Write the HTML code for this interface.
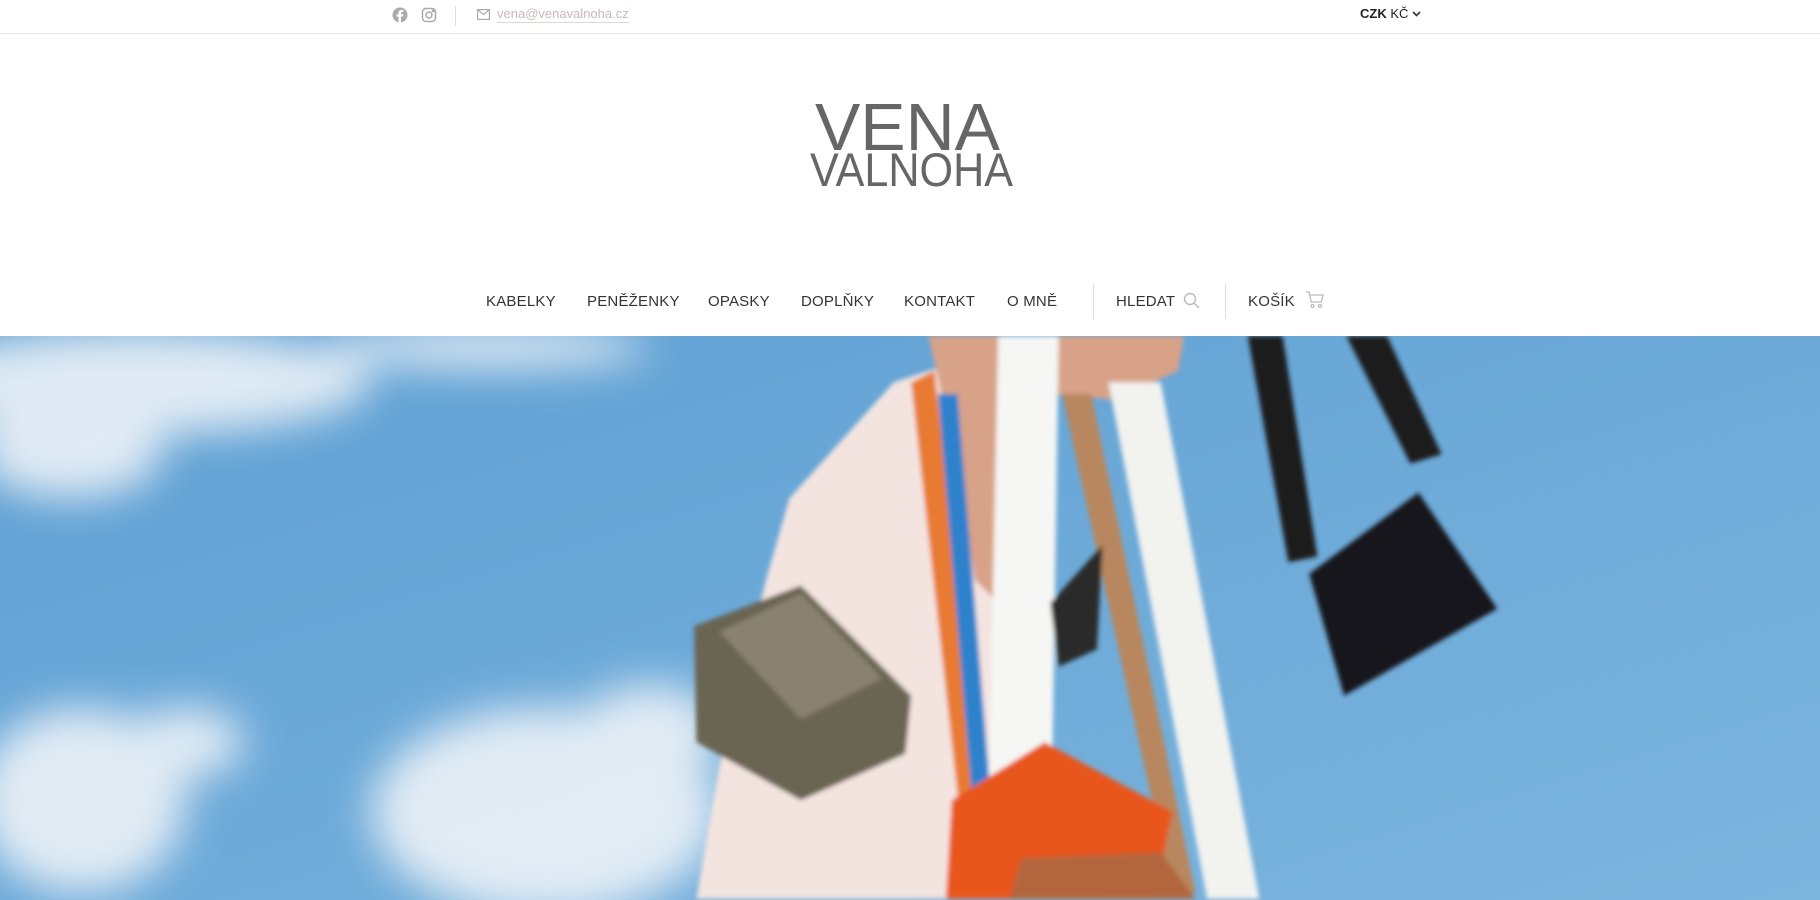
<!DOCTYPE html>
<html><head><meta charset="utf-8"><style>
*{margin:0;padding:0;box-sizing:border-box}
body{width:1820px;height:900px;overflow:hidden;background:#fff;font-family:"Liberation Sans",sans-serif;position:relative}
.top{position:absolute;left:0;top:0;width:1820px;height:34px;border-bottom:1px solid #e6e6e6}
.abs{position:absolute}
.email{left:497px;top:6px;font-size:13px;color:#c9b9b9;border-bottom:1px solid #e3d6d6;line-height:16px}
.cur{left:1360px;top:6px;font-size:13px;color:#222;line-height:16px}
.nav{position:absolute;top:293px;font-size:15px;color:#333;letter-spacing:.2px;white-space:nowrap;line-height:18px}
.vd{position:absolute;width:1px;background:#ddd;top:284px;height:35px}
</style></head><body>
<div class="top"></div>
<svg class="abs" style="left:392px;top:7px" width="16" height="16" viewBox="0 0 16 16"><circle cx="8" cy="8" r="7.5" fill="#aaa"/><path d="M9 16V9.5h2l.3-2.2H9V6c0-.6.2-1 1-1h1.3V3.1c-.3 0-1-.1-1.8-.1-1.8 0-3 1-3 3v1.4H4.6v2.2h1.9V16" fill="#fff"/></svg>
<svg class="abs" style="left:421px;top:7px" width="16" height="16" viewBox="0 0 16 16" fill="none" stroke="#aaa" stroke-width="1.5"><rect x="1.5" y="1.5" width="13" height="13" rx="3.5"/><circle cx="8" cy="8" r="3"/><circle cx="12" cy="4" r=".6" fill="#aaa"/></svg>
<div class="abs" style="left:455px;top:6px;width:1px;height:20px;background:#ddd"></div>
<svg class="abs" style="left:477px;top:9px" width="13" height="11" viewBox="0 0 13 11" fill="none" stroke="#aaa" stroke-width="1.2"><rect x=".6" y=".6" width="11.8" height="9.8"/><path d="M.6 .6l5.9 5 5.9-5"/></svg>
<div class="abs email">vena@venavalnoha.cz</div>
<div class="abs cur"><b style="font-weight:600">CZK</b> KČ</div>
<svg class="abs" style="left:1412px;top:11px" width="9" height="6" viewBox="0 0 9 6"><path d="M1 1l3.5 3.5L8 1" fill="none" stroke="#333" stroke-width="1.6"/></svg>
<svg class="abs" style="left:800px;top:95px" width="225" height="100" viewBox="0 0 225 100">
<text x="15" y="55" font-family="Liberation Sans, sans-serif" font-size="67" fill="#666" textLength="185" lengthAdjust="spacingAndGlyphs" font-weight="normal">VENA</text>
<text x="10" y="91" font-family="Liberation Sans, sans-serif" font-size="47" fill="#666" textLength="203" lengthAdjust="spacingAndGlyphs">VALNOHA</text>
</svg>
<div class="nav" style="left:486px">KABELKY</div>
<div class="nav" style="left:587px">PENĚŽENKY</div>
<div class="nav" style="left:708px">OPASKY</div>
<div class="nav" style="left:801px">DOPLŇKY</div>
<div class="nav" style="left:904px">KONTAKT</div>
<div class="nav" style="left:1007px">O MNĚ</div>
<div class="vd" style="left:1093px"></div>
<div class="nav" style="left:1116px">HLEDAT</div>
<svg class="abs" style="left:1183px;top:292px" width="17" height="17" viewBox="0 0 17 17" fill="none" stroke="#bbb" stroke-width="1.4"><circle cx="7" cy="7" r="5.5"/><path d="M11 11l5 5"/></svg>
<div class="vd" style="left:1225px"></div>
<div class="nav" style="left:1248px">KOŠÍK</div>
<svg class="abs" style="left:1305px;top:291px" width="19" height="18" viewBox="0 0 19 18" fill="none" stroke="#bbb" stroke-width="1.3"><path d="M1 1h3l2.2 10h10l2-7H5"/><circle cx="7.5" cy="15" r="1.5"/><circle cx="15" cy="15" r="1.5"/></svg>
<svg class="abs" style="left:0;top:336px" width="1820" height="564" viewBox="0 290 1568 486" preserveAspectRatio="none">
<defs>
<linearGradient id="sky" x1="0" y1="0" x2="1" y2="1"><stop offset="0" stop-color="#5e9fd3"/><stop offset="1" stop-color="#7cb5de"/></linearGradient>
<filter id="bl"><feGaussianBlur stdDeviation="18"/></filter>
<filter id="b2"><feGaussianBlur stdDeviation="2"/></filter>
</defs>
<rect x="0" y="290" width="1568" height="486" fill="url(#sky)"/>
<g filter="url(#bl)" fill="#eef3f8" opacity=".9">
<ellipse cx="120" cy="330" rx="200" ry="45"/><ellipse cx="60" cy="390" rx="80" ry="40"/><ellipse cx="420" cy="300" rx="140" ry="18"/>
<ellipse cx="70" cy="690" rx="90" ry="80"/><ellipse cx="160" cy="640" rx="50" ry="30"/>
<ellipse cx="470" cy="700" rx="150" ry="90"/><ellipse cx="560" cy="630" rx="60" ry="40"/>
</g>
<g filter="url(#b2)">
<path d="M770 330 L860 300 L870 775 L600 775 L620 660 L660 500 L680 430 Z" fill="#f4e4e0"/>
<path d="M800 290 L1020 290 L1015 320 L960 345 L910 340 L880 360 L860 520 L840 500 L820 380 Z" fill="#d8a288"/>
<path d="M785 330 L805 320 L850 720 L830 730 Z" fill="#e87a30"/>
<path d="M808 340 L825 340 L858 740 L842 745 Z" fill="#2f82cc"/>
<path d="M860 290 L912 290 L905 770 L850 770 Z" fill="#f6f6f4"/>
<path d="M915 340 L940 340 L1030 770 L1010 770 Z" fill="#b8875e"/>
<path d="M955 330 L1000 330 L1085 775 L1040 775 Z" fill="#f2f2ef"/>
<path d="M1075 290 L1105 290 L1135 480 L1110 485 Z" fill="#1a1a1e"/>
<path d="M1160 290 L1195 290 L1242 392 L1215 400 Z" fill="#1a1a1e"/>
<path d="M1128 495 L1222 425 L1290 525 L1158 600 Z" fill="#15161c"/>
<path d="M598 540 L690 505 L785 600 L780 650 L690 690 L600 640 Z" fill="#6b6552"/>
<path d="M620 545 L690 512 L760 585 L690 620 Z" fill="#8a8270"/>
<path d="M905 520 L950 470 L945 560 L912 575 Z" fill="#2a2a2a"/>
<path d="M820 690 L900 640 L1010 700 L995 775 L815 775 Z" fill="#e8561e"/>
<path d="M880 740 L1000 735 L1030 775 L870 775 Z" fill="#b3663c"/>
</g>
</svg>
</body></html>
